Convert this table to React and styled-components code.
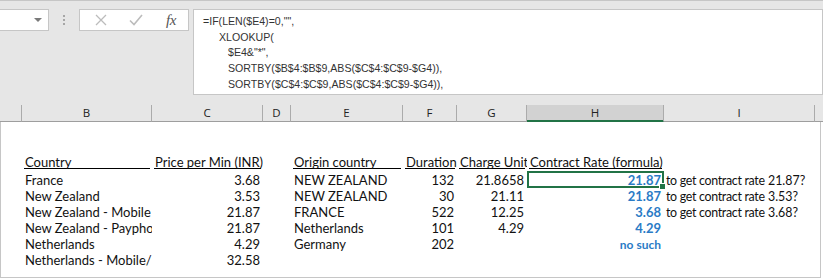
import React from 'react';
import styled, { createGlobalStyle } from 'styled-components';

const GlobalStyle = createGlobalStyle`
    body {
        margin: 0;
        background: #ffffff;
        font-family: "Open Sans", "Noto Sans", sans-serif;
    }
`;

const COLS = '22px 130px 111px 28px 112px 54px 70px 137px 151px 1fr';

const Window = styled.div`
    width: 823px;
    height: 280px;
    overflow: hidden;
`;

const Toolbar = styled.div`
    display: flex;
    align-items: flex-start;
    background: #e6e6e6;
    border-top: 1px solid #c6c6c6;
    padding: 8px 0 10px 0;
`;

const NameBox = styled.div`
    box-sizing: border-box;
    width: 50px;
    height: 22px;
    margin-left: -1px;
    background: #fff;
    border: 1px solid #c6c6c6;
    display: flex;
    align-items: center;
    justify-content: flex-end;
    padding-right: 6px;
`;

const Arrow = styled.div`
    width: 0;
    height: 0;
    border-left: 4px solid transparent;
    border-right: 4px solid transparent;
    border-top: 4px solid #7a7a7a;
`;

const Grip = styled.div`
    width: 30px;
    height: 22px;
    display: flex;
    flex-direction: column;
    align-items: center;
    justify-content: center;
    gap: 2px;
`;

const Dot = styled.span`
    width: 2px;
    height: 2px;
    background: #a6a6a6;
`;

const ButtonBox = styled.div`
    box-sizing: border-box;
    width: 110px;
    height: 22px;
    background: #fff;
    border: 1px solid #c6c6c6;
    display: flex;
    align-items: center;
    padding-left: 12px;
    gap: 17px;
`;

const IconButton = styled.span`
    width: 18px;
    height: 18px;
    display: flex;
    align-items: center;
    justify-content: center;
`;

const Fx = styled.span`
    font-family: "Liberation Serif", "DejaVu Serif", serif;
    font-style: italic;
    font-size: 15px;
    color: #555;
    margin-left: 4px;
    letter-spacing: -0.5px;
`;

const FormulaBox = styled.div`
    box-sizing: border-box;
    width: 630px;
    height: 86px;
    margin-left: 4px;
    background: #fff;
    border: 1px solid #c6c6c6;
    padding: 4px 0 0 9px;
    overflow: hidden;
`;

const FormulaLine = styled.div`
    font-family: "Liberation Sans", Arial, sans-serif;
    font-size: 10.6px;
    line-height: 15.7px;
    color: #333;
    white-space: pre;
    padding-left: ${p => p.$indent}px;
`;

const HeaderRow = styled.div`
    display: grid;
    grid-template-columns: ${COLS};
    height: 16px;
    background: #e6e6e6;
`;

const HeaderCell = styled.div`
    box-sizing: border-box;
    border-right: ${p => (p.$last ? 'none' : '1px solid #ababab')};
    border-bottom: 1px solid ${p => (p.$active ? '#217346' : '#9e9e9e')};
    box-shadow: ${p => (p.$active ? 'inset 0 -1px 0 #217346' : 'none')};
    background: ${p => (p.$active ? '#d2d2d2' : '#e6e6e6')};
    font-family: "Open Sans", "Noto Sans", sans-serif;
    font-size: 11.5px;
    line-height: 16px;
    text-align: center;
    color: #222;
`;

const Sheet = styled.div`
    box-sizing: border-box;
    width: 821px;
    height: 157px;
    border-left: 1px solid #c6c6c6;
    border-right: 1px solid #c6c6c6;
    border-bottom: 1px solid #c6c6c6;
    padding-top: 35px;
`;

const Grid = styled.div`
    display: grid;
    grid-template-columns: 21px 130px 111px 28px 112px 54px 70px 137px 151px 1fr;
    grid-auto-rows: 16px;
`;

const Cell = styled.div`
    position: relative;
    box-sizing: border-box;
    padding: 0 3px;
    overflow: ${p => (p.$selected ? 'visible' : 'hidden')};
    white-space: pre;
    text-align: ${p => p.$align || 'left'};
    font-family: "Lato", "Open Sans", sans-serif;
    font-size: ${p => (p.$small ? '12px' : '13px')};
    font-weight: ${p => (p.$bold ? 700 : 400)};
    color: ${p => (p.$blue ? '#2a7bc6' : '#111')};
    line-height: 17px;
`;

const NoteCell = styled(Cell)`
    padding-left: 2px;
    font-size: 12.4px;
`;

const NoteLabel = styled.span`
    display: inline-block;
    width: 102px;
    letter-spacing: -0.3px;
`;

const Underline = styled.span`
    display: block;
    margin: 0 -1px;
    padding: 0 1px;
    line-height: 12px;
    border-bottom: 1px solid #000;
`;

const Selection = styled.div`
    position: absolute;
    top: -1px;
    left: 0;
    right: 0;
    bottom: 0;
    border: 2px solid #217346;
    z-index: 2;
    pointer-events: none;
`;

const FillHandle = styled.div`
    position: absolute;
    right: -4px;
    bottom: -4px;
    width: 5px;
    height: 5px;
    background: #217346;
    border: 1px solid #fff;
`;

const headerLetters = ['', 'B', 'C', 'D', 'E', 'F', 'G', 'H', 'I', ''];

const formula = [
    { indent: 0, text: '=IF(LEN($E4)=0,"",' },
    { indent: 16, text: 'XLOOKUP(' },
    { indent: 25, text: '$E4&"*",' },
    { indent: 25, text: 'SORTBY($B$4:$B$9,ABS($C$4:$C$9-$G4)),' },
    { indent: 25, text: 'SORTBY($C$4:$C$9,ABS($C$4:$C$9-$G4)),' },
    { indent: 25, text: '"no such",2))' },
];

const headings = ['Country', 'Price per Min (INR)', '', 'Origin country', 'Duration', 'Charge Unit', 'Contract Rate (formula)'];

const rows = [
    ['France', '3.68', 'NEW ZEALAND', '132', '21.8658', '21.87', '21.87?'],
    ['New Zealand', '3.53', 'NEW ZEALAND', '30', '21.11', '21.87', '3.53?'],
    ['New Zealand - Mobile', '21.87', 'FRANCE', '522', '12.25', '3.68', '3.68?'],
    ['New Zealand - Payphone', '21.87', 'Netherlands', '101', '4.29', '4.29', ''],
    ['Netherlands', '4.29', 'Germany', '202', '', 'no such', ''],
    ['Netherlands - Mobile/Payphone', '32.58', '', '', '', '', ''],
];

function CrossIcon() {
    return (
        <svg width="12" height="12" viewBox="0 0 12 12">
            <path d="M1 1L11 11M11 1L1 11" stroke="#bcbcbc" strokeWidth="1.3" fill="none" />
        </svg>
    );
}

function CheckIcon() {
    return (
        <svg width="14" height="12" viewBox="0 0 14 12">
            <path d="M1 6.5L5 10.5L13 1" stroke="#bcbcbc" strokeWidth="1.6" fill="none" />
        </svg>
    );
}

function App() {
    return (
        <Window>
            <GlobalStyle />
            <Toolbar>
                <NameBox>
                    <Arrow />
                </NameBox>
                <Grip>
                    <Dot />
                    <Dot />
                    <Dot />
                </Grip>
                <ButtonBox>
                    <IconButton><CrossIcon /></IconButton>
                    <IconButton><CheckIcon /></IconButton>
                    <Fx>fx</Fx>
                </ButtonBox>
                <FormulaBox>
                    {formula.map((line, i) => (
                        <FormulaLine key={i} $indent={line.indent}>{line.text}</FormulaLine>
                    ))}
                </FormulaBox>
            </Toolbar>
            <HeaderRow>
                {headerLetters.map((l, i) => (
                    <HeaderCell key={i} $active={l === 'H'} $last={i === headerLetters.length - 1}>{l}</HeaderCell>
                ))}
            </HeaderRow>
            <Sheet>
                <Grid>
                    <Cell />
                    {headings.map((h, i) => (
                        <Cell key={i}>{h && <Underline>{h}</Underline>}</Cell>
                    ))}
                    <Cell />
                    <Cell />
                    {rows.map((r, ri) => (
                        <React.Fragment key={ri}>
                            <Cell />
                            <Cell>{r[0]}</Cell>
                            <Cell $align="right">{r[1]}</Cell>
                            <Cell />
                            <Cell>{r[2]}</Cell>
                            <Cell $align="right">{r[3]}</Cell>
                            <Cell $align="right">{r[4]}</Cell>
                            <Cell $align="right" $bold $blue $small={r[5] === 'no such'} $selected={ri === 0}>
                                {r[5]}
                                {ri === 0 && (
                                    <Selection>
                                        <FillHandle />
                                    </Selection>
                                )}
                            </Cell>
                            {r[6] ? (
                                <NoteCell>
                                    <NoteLabel>to get contract rate</NoteLabel>
                                    {r[6]}
                                </NoteCell>
                            ) : (
                                <Cell />
                            )}
                            <Cell />
                        </React.Fragment>
                    ))}
                </Grid>
            </Sheet>
        </Window>
    );
}

export default App;
